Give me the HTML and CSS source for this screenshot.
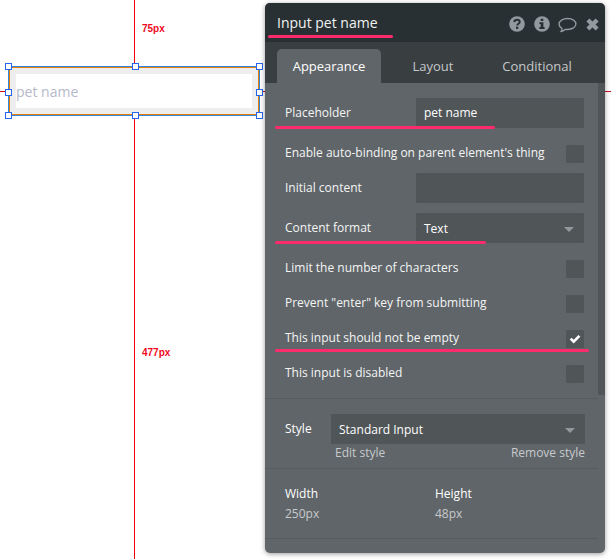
FILE: index.html
```html
<!DOCTYPE html>
<html lang="en">
<head>
<meta charset="utf-8">
<title>Input pet name</title>
<link rel="stylesheet" href="styles.css">
</head>
<body>
<main class="canvas">
  <div class="guide guide-left"></div>
  <div class="guide guide-right"></div>
  <div class="guide guide-top"></div>
  <div class="guide guide-bottom"></div>
  <span class="distance distance-top">75px</span>
  <span class="distance distance-bottom">477px</span>
  <div class="element">
    <div class="element-frame"><div class="element-input"><span>pet name</span></div></div>
    <i class="handle nw"></i><i class="handle n"></i><i class="handle ne"></i>
    <i class="handle w"></i><i class="handle e"></i>
    <i class="handle sw"></i><i class="handle s"></i><i class="handle se"></i>
  </div>

  <section class="panel">
    <header class="header">
      <h1 class="title">Input pet name</h1>
      <div class="tools">
        <svg class="badge" width="16" height="16" viewBox="0 0 16 16"><circle cx="8" cy="8" r="7.8" fill="#919b9f"/><path d="M5.2 6.2C5.5 4.4 6.6 3.8 8 3.8c1.6 0 2.7.8 2.7 2.1 0 2-2.5 1.7-2.5 3.5" fill="none" stroke="#293033" stroke-width="2"/><rect x="7" y="10.7" width="2.3" height="2.2" fill="#293033"/></svg>
        <svg class="badge" width="16" height="16" viewBox="0 0 16 16"><circle cx="8" cy="8" r="7.8" fill="#919b9f"/><path d="M6.7 2.8h2.6V5H6.7zM5.4 6.2h4v4.9h1.2v1.8H5.4v-1.8h1.3V8H5.4z" fill="#293033"/></svg>
        <svg class="bubble" width="19" height="17" viewBox="0 0 19 17"><path d="M9.6 1.5c4.7 0 8.3 2.4 8.3 5.5s-3.6 5.500-8.300 5.500c-.8 0-1.600-.1-2.300-.2-1.200 1.300-2.700 2.100-4.500 2.400.8-.9 1.300-1.900 1.300-3.200C2.200 10.500 1.100 8.900 1.100 7c0-3.100 3.800-5.500 8.500-5.500z" fill="none" stroke="#919b9f" stroke-width="1.3" stroke-linejoin="round"/></svg>
        <svg class="close" width="13" height="13" viewBox="0 0 13 13"><path d="M1.9 1.9l9.2 9.2M11.1 1.9l-9.2 9.2" stroke="#919b9f" stroke-width="4.2"/></svg>
      </div>
      <div class="mark mark-title"></div>
    </header>
    <nav class="tabs">
      <span class="tab active">Appearance</span>
      <span class="tab">Layout</span>
      <span class="tab">Conditional</span>
    </nav>
    <div class="body">
      <div class="group options">
        <div class="row"><label>Placeholder</label><div class="field"><span>pet name</span></div><div class="mark mark-placeholder"></div></div>
        <div class="row check"><label>Enable auto-binding on parent element's thing</label><div class="box"></div></div>
        <div class="row"><label>Initial content</label><div class="field"></div></div>
        <div class="row"><label>Content format</label><div class="field select"><span>Text</span></div><div class="mark mark-format"></div></div>
        <div class="row check"><label>Limit the number of characters</label><div class="box"></div></div>
        <div class="row check"><label>Prevent "enter" key from submitting</label><div class="box"></div></div>
        <div class="row check"><label>This input should not be empty</label><div class="box"><svg width="18" height="18" viewBox="0 0 18 18"><path d="M4.7 8.6l3 3 5.7-5.7" fill="none" stroke="#fff" stroke-width="2.7"/></svg></div><div class="mark mark-empty"></div></div>
        <div class="row check"><label>This input is disabled</label><div class="box"></div></div>
      </div>
      <div class="group style-group">
        <div class="style-row"><label>Style</label><div class="field select"><span>Standard Input</span></div></div>
        <div class="links"><span>Edit style</span><span>Remove style</span></div>
      </div>
      <div class="group size-group">
        <dl><dt>Width</dt><dd>250px</dd></dl>
        <dl><dt>Height</dt><dd>48px</dd></dl>
      </div>
      <div class="scrollbar"></div>
    </div>
  </section>
</main>
</body>
</html>
```
FILE: styles.css
```css
* { box-sizing: border-box; }
body { margin: 0; background: #fff; font-family: "Open Sans", "Noto Sans", sans-serif; font-size: 12px; }
.canvas { position: relative; width: 611px; height: 559px; overflow: hidden; }

/* Canvas guides and selected element */
.guide { position: absolute; background: #f2000c; }
.guide-top { left: 134px; top: 0; width: 1px; height: 66px; }
.guide-bottom { left: 134px; top: 116px; width: 1px; height: 443px; }
.guide-left { left: 0; top: 91px; width: 8px; height: 1px; background: #d0101c; }
.guide-right { left: 260px; top: 91px; width: 351px; height: 1px; background: #d0101c; }
.distance { position: absolute; left: 142px; color: #ee0a1c; font: bold 10px/12px "Liberation Sans", Arial, sans-serif; }
.distance-top { top: 23px; }
.distance-bottom { top: 347px; }
.element { position: absolute; left: 8px; top: 66px; width: 252px; height: 50px; border: 1px solid #3387e0; }
.element-frame { height: 48px; padding: 6px; border: 1px solid #e67e00; background: #eee; }
.element-input { height: 34px; background: #fff; color: #b5b9c8; font-size: 14px; line-height: 35px; }
.handle { position: absolute; width: 7px; height: 7px; border: 1px solid #2865ef; background: #fff; }
.nw, .n, .ne { top: -4px; }
.w, .e { top: 22px; }
.sw, .s, .se { top: 45px; }
.nw, .w, .sw { left: -4px; }
.n, .s { left: 123px; }
.ne, .e, .se { left: 247px; }

/* Property panel */
.panel { position: absolute; left: 265px; top: 3px; width: 340px; height: 550px; border-radius: 5px; overflow: hidden; background: #606569; color: #fff; box-shadow: 0 1px 5px rgba(0,0,0,.4); }
.header { position: relative; display: flex; justify-content: space-between; height: 39px; padding: 0 6px 0 12px; background: #293033; }
.title { margin: 0; font-size: 14px; font-weight: 400; line-height: 40px; color: #f0f2f2; }
.tools { display: flex; align-items: center; gap: 9px; padding-top: 3px; }
.badge { transform: translateX(1px); }
.bubble { margin-top: 2px; }
.tabs { display: flex; height: 41px; padding: 7px 0 0 12px; background: #393e41; color: #c5c8ca; font-size: 13px; line-height: 34px; }
.tab { width: 104px; text-align: center; white-space: nowrap; }
.tab.active { border-radius: 5px 5px 0 0; background: #606569; color: #fff; }
.body { position: relative; }
.group { width: 333px; border-bottom: 1px solid #565b5f; }
.options { height: 316px; padding: 10px 14px 0 20px; }
.row { position: relative; display: flex; justify-content: space-between; height: 40px; padding-top: 5px; line-height: 30px; }
.row label { color: #f4f5f5; }
.field { width: 168px; height: 30px; padding-left: 8px; border-radius: 1px; background: #505558; line-height: 30px; }
.row.check { height: 35px; padding-top: 12px; line-height: 16px; }
.box { width: 18px; height: 18px; border-radius: 1px; background: #505558; }
.box svg { display: block; }
.select { display: flex; align-items: center; justify-content: space-between; padding-top: 2px; padding-right: 10px; }
.select::after { content: ""; border: solid transparent; border-width: 5px 5px 0; border-top-color: #92989b; }
.style-group { height: 70px; padding: 15px 13px 0 20px; }
.style-row { display: flex; justify-content: space-between; line-height: 30px; }
.style-row .field { width: 254px; }
.links { display: flex; justify-content: space-between; padding-left: 50px; line-height: 18px; color: #c7cacc; }
.size-group { display: grid; grid-template-columns: 150px 1fr; height: 70px; padding: 14px 20px 0; }
dl, dd { margin: 0; }
dt { line-height: 21px; }
dd { line-height: 20px; color: #c7cacc; }
.scrollbar { position: absolute; top: 0; right: 0; width: 7px; height: 312px; background: #505558; }

/* Pink emphasis strokes */
.mark { position: absolute; height: 3px; border-radius: 2px; background: #fc2b6b; }
.mark-title { left: 3px; top: 32px; width: 125px; }
.mark-placeholder { left: -10px; top: 33px; width: 220px; }
.mark-format { left: -10px; top: 33px; width: 211px; }
.mark-empty { left: -10px; top: 31px; width: 314px; }
```
